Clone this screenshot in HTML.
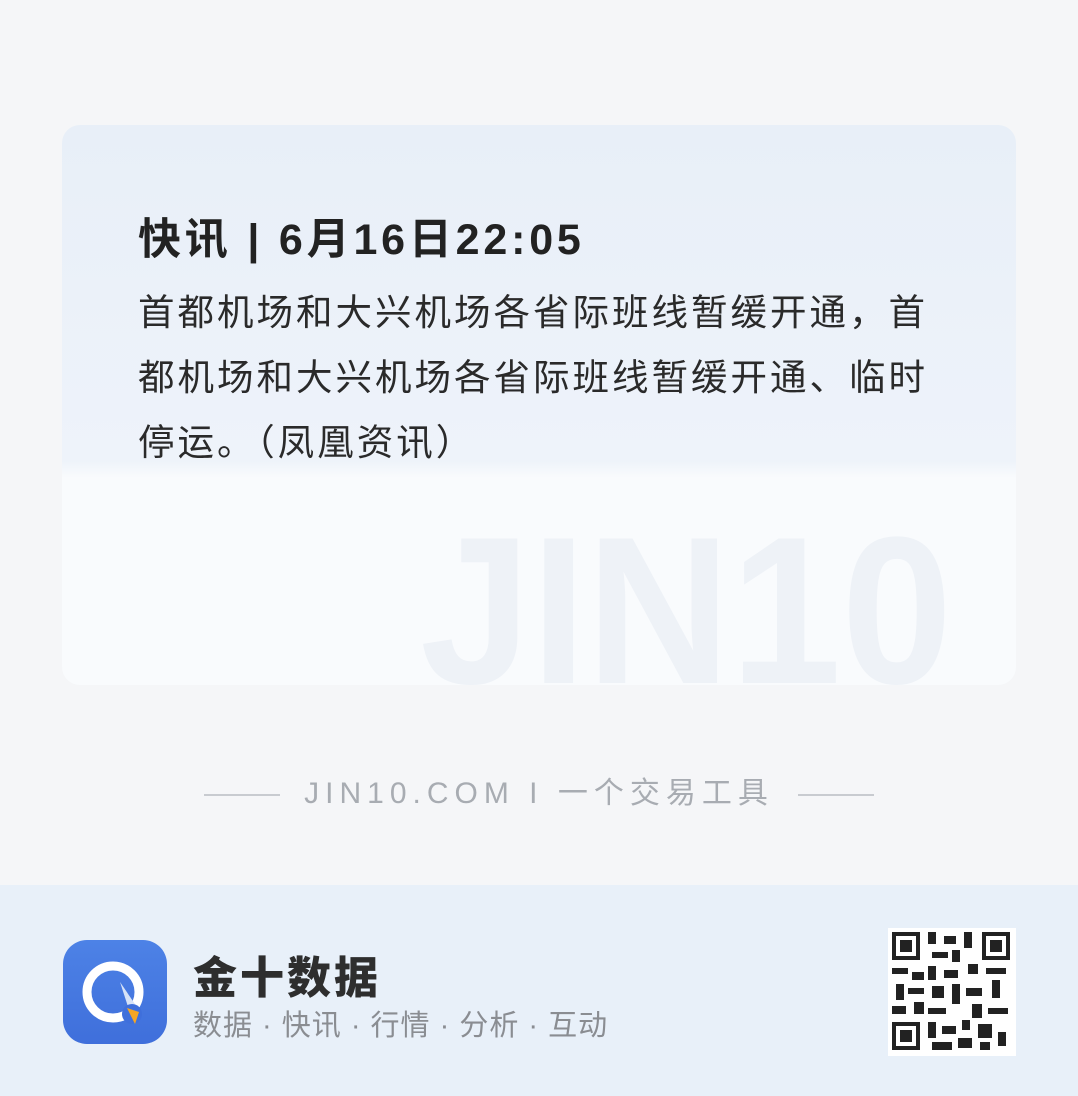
<!DOCTYPE html>
<html><head><meta charset="utf-8"><style>
body{margin:0;width:1078px;height:1096px;background:#f5f6f8;position:relative;overflow:hidden;font-family:"Liberation Sans","Noto Sans CJK SC",sans-serif}
.card{position:absolute;left:62px;top:125px;width:954px;height:560px;border-radius:18px;background:linear-gradient(#e8eff8 0%,#eef3fa 60%,#f9fbfd 63%,#f9fbfd 100%)}
.wm{position:absolute;left:420px;top:490px;font-size:210px;font-weight:bold;color:#eef2f7;transform:scaleX(0.95);transform-origin:left}
.title{position:absolute;left:138px;top:205px;font-size:43px;font-weight:bold;color:#222;white-space:nowrap;letter-spacing:3.8px}
.body{position:absolute;left:138px;top:280px;width:900px;font-size:36.5px;line-height:65px;color:#2a2a2a;white-space:nowrap;letter-spacing:3px}
.foot{position:absolute;top:768px;left:0;width:1078px;text-align:center;font-size:30px;color:#a8acb2;letter-spacing:6px;white-space:nowrap}
.line{display:inline-block;width:76px;height:2px;background:#c8cbd0;vertical-align:middle;margin:0 24px}
.bottom{position:absolute;left:0;top:885px;width:1078px;height:211px;background:#e8f0f9}
.icon{position:absolute;left:63px;top:940px;width:104px;height:104px;border-radius:24px;background:linear-gradient(#4d82e6,#3f6fdb)}
.name{position:absolute;left:193px;top:942px;font-size:44px;font-weight:900;color:#2e2e2e;letter-spacing:3px}
.sub{position:absolute;left:193px;top:1002px;font-size:29px;color:#8a8d92;letter-spacing:1px}
.qr{position:absolute;left:888px;top:928px;width:128px;height:128px;background:#fff}
</style></head><body>
<div class="card"></div>
<div class="wm">JIN10</div>
<div class="title">快讯 | 6月16日22:05</div>
<div class="body">首都机场和大兴机场各省际班线暂缓开通，首<br>都机场和大兴机场各省际班线暂缓开通、临时<br>停运。（凤凰资讯）</div>
<div class="foot"><span class="line"></span>JIN10.COM I 一个交易工具<span class="line"></span></div>
<div class="bottom"></div>
<div class="icon"><svg width="104" height="104" viewBox="0 0 104 104"><circle cx="50" cy="52" r="26" fill="none" stroke="#fff" stroke-width="9"/><path d="M57 42 L76 70 L68 76 Z" fill="#d6e2f7"/><circle cx="69" cy="74" r="10" fill="#3f6fdb"/><path d="M64 68 L76 72 L72 84 Z" fill="#f5a623"/></svg></div>
<div class="name">金十数据</div>
<div class="sub">数据 · 快讯 · 行情 · 分析 · 互动</div>
<div class="qr"><svg width="128" height="128" viewBox="0 0 128 128">
<g fill="#222">
<rect x="4" y="4" width="28" height="28"/><rect x="8" y="8" width="20" height="20" fill="#fff"/><rect x="12" y="12" width="12" height="12"/>
<rect x="94" y="4" width="28" height="28"/><rect x="98" y="8" width="20" height="20" fill="#fff"/><rect x="102" y="12" width="12" height="12"/>
<rect x="4" y="94" width="28" height="28"/><rect x="8" y="98" width="20" height="20" fill="#fff"/><rect x="12" y="102" width="12" height="12"/>
<rect x="40" y="4" width="8" height="12"/><rect x="56" y="8" width="12" height="8"/><rect x="76" y="4" width="8" height="16"/><rect x="44" y="24" width="16" height="6"/><rect x="64" y="22" width="8" height="12"/>
<rect x="4" y="40" width="16" height="6"/><rect x="24" y="44" width="12" height="8"/><rect x="40" y="38" width="8" height="14"/><rect x="56" y="42" width="14" height="8"/><rect x="80" y="36" width="10" height="10"/><rect x="98" y="40" width="20" height="6"/>
<rect x="8" y="56" width="8" height="16"/><rect x="20" y="60" width="16" height="6"/><rect x="44" y="58" width="12" height="12"/><rect x="64" y="56" width="8" height="20"/><rect x="78" y="60" width="16" height="8"/><rect x="104" y="52" width="8" height="18"/>
<rect x="4" y="78" width="14" height="8"/><rect x="26" y="74" width="10" height="12"/><rect x="40" y="80" width="18" height="6"/><rect x="84" y="76" width="10" height="14"/><rect x="100" y="80" width="20" height="6"/>
<rect x="40" y="94" width="8" height="16"/><rect x="54" y="98" width="14" height="8"/><rect x="74" y="92" width="8" height="10"/><rect x="90" y="96" width="14" height="14"/><rect x="110" y="104" width="8" height="14"/>
<rect x="44" y="114" width="20" height="8"/><rect x="70" y="110" width="14" height="10"/><rect x="92" y="114" width="10" height="8"/>
</g></svg></div>
</body></html>
